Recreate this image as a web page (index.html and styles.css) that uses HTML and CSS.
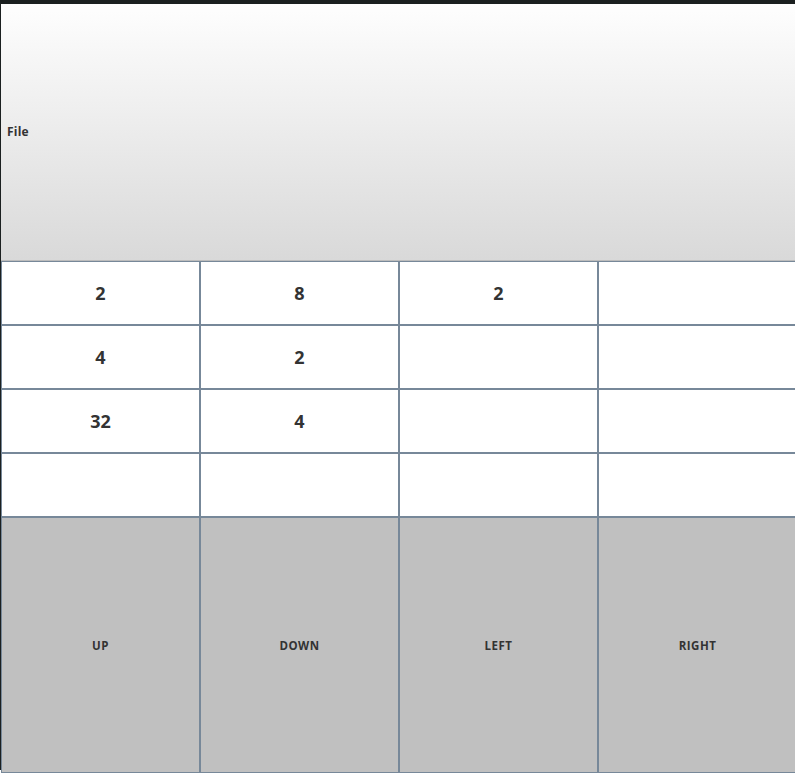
FILE: index.html
```html
<!DOCTYPE html>
<html>
<head>
<meta charset="utf-8">
<link rel="stylesheet" href="styles.css">
</head>
<body>
<div class="window">
  <div class="menubar"><span class="menu">File</span></div>
  <div class="board">
    <div class="cell">2</div><div class="cell">8</div><div class="cell">2</div><div class="cell"></div>
    <div class="cell">4</div><div class="cell">2</div><div class="cell"></div><div class="cell"></div>
    <div class="cell">32</div><div class="cell">4</div><div class="cell"></div><div class="cell"></div>
    <div class="cell"></div><div class="cell"></div><div class="cell"></div><div class="cell"></div>
    <div class="btn">UP</div><div class="btn">DOWN</div><div class="btn">LEFT</div><div class="btn">RIGHT</div>
  </div>
</div>
</body>
</html>
```
FILE: styles.css
```css
html, body {
  margin: 0;
  padding: 0;
  background: #ffffff;
  overflow: hidden;
}
body {
  width: 795px;
  height: 774px;
  font-family: "Open Sans", "DejaVu Sans", sans-serif;
  color: #333333;
}
.window {
  border-top: 4px solid #1b2020;
  border-left: 1px solid #1b2020;
  height: 770px;
  box-sizing: border-box;
  display: flex;
  flex-direction: column;
}
.menubar {
  height: 257px;
  box-sizing: border-box;
  padding-bottom: 1px;
  background: linear-gradient(#fefefe, #d9d9d9);
  border-bottom: 1px solid #bcbcbc;
  display: flex;
  align-items: center;
  padding-left: 6px;
  flex: none;
}
.menu {
  font-size: 12px;
  font-weight: 700;
  letter-spacing: 0.2px;
}
.board {
  display: grid;
  grid-template-columns: repeat(4, 199px);
  grid-template-rows: repeat(4, 64px) 256px;
  width: 796px;
  flex: none;
}
.cell, .btn {
  border: 1px solid #778899;
  display: flex;
  align-items: center;
  justify-content: center;
  box-sizing: border-box;
}
.cell {
  background: #ffffff;
  font-size: 18px;
  font-weight: 700;
}
.btn {
  background: #c0c0c0;
  font-size: 11.5px;
  font-weight: 700;
  letter-spacing: 0.5px;
}
```
